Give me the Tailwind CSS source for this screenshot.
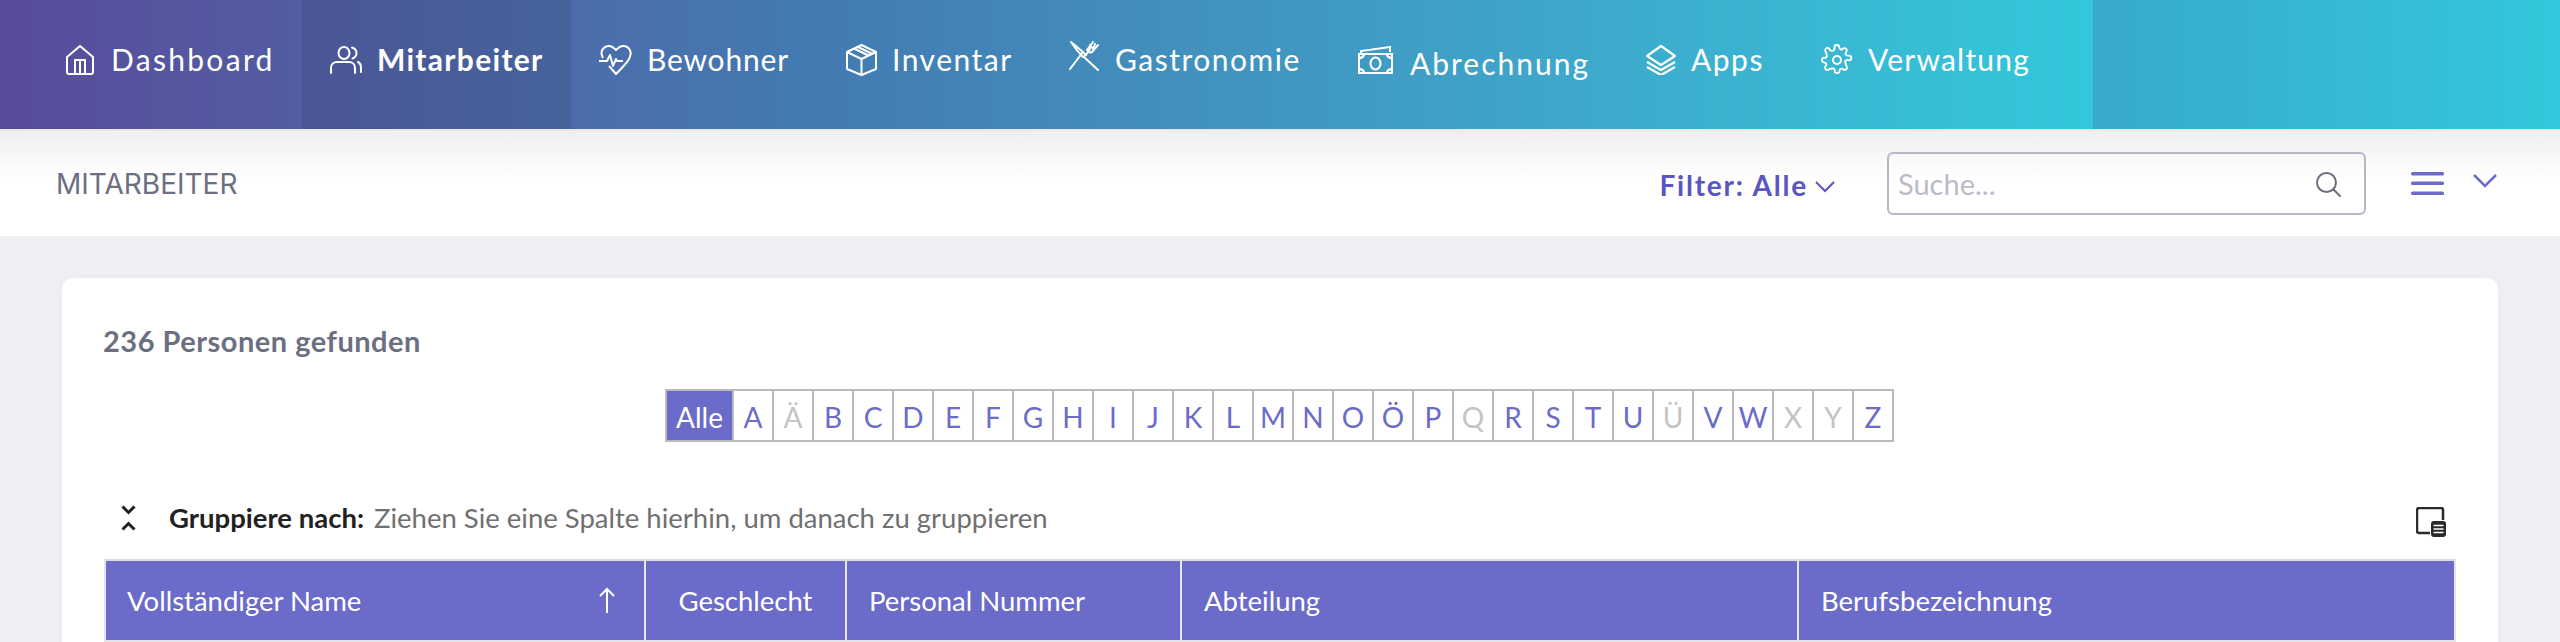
<!DOCTYPE html>
<html lang="de"><head><meta charset="utf-8"><title>Mitarbeiter</title>
<script src="https://cdn.jsdelivr.net/npm/@tailwindcss/browser@4"></script></head>
<body class="m-0">
<div class="w-[2560px] h-[642px] overflow-hidden bg-[#f0f0f4] font-['Lato',sans-serif]">
  <nav class="flex h-[129px] text-white text-[30px] tracking-[1.5px]">
    <div class="w-[2093px] flex pl-[37px] bg-linear-to-r from-[#574b9b] via-[#4379b1] via-38% to-[#32c8dc]">
      <a class="w-[265px] pl-[28px] pb-[10px] flex items-center gap-[16px]"><svg class="w-[30px] h-[30px] shrink-0" viewBox="0 0 30 30" fill="none" stroke="currentColor" stroke-width="2" stroke-linejoin="round"><path d="M2 12 15 1l13 11v15a2 2 0 0 1-2 2H4a2 2 0 0 1-2-2z"/><path d="M10 29V15h10v14M15 15v14"/></svg><span class="tracking-[2.3px]">Dashboard</span></a>
      <a class="w-[269px] pl-[28px] pb-[10px] flex items-center gap-[15px] bg-black/8 font-bold tracking-[1.3px]"><svg class="w-[32px] h-[28px] shrink-0" viewBox="0 0 32 28" fill="none" stroke="currentColor" stroke-width="2" stroke-linecap="round"><ellipse cx="14" cy="7" rx="5.5" ry="6"/><path d="M22 1.5c3 1 4.5 3 4.5 5.500s-1.500 4.500-4 5.500M1 27v-5c0-4 3-6 6-6h12c4 0 6 3 6 6v5M28 16c2 1 3 3 3 6v4"/></svg><span>Mitarbeiter</span></a>
      <a class="w-[246px] pl-[27px] pb-[10px] flex items-center gap-[15px]"><svg class="w-[34px] h-[30px] shrink-0" viewBox="0 0 34 30" fill="none" stroke="currentColor" stroke-width="2" stroke-linejoin="round"><path d="M5 13C1 6 6 1 11 1c3 0 5 2 7 4 2-2 4-4 7-4 6 0 10 6 6 13-2 4-8 10-13 15l-7-8"/><path d="M1 16h8l3-6 3 11 3-7 1 2h6"/></svg><span class="tracking-[0.8px]">Bewohner</span></a>
      <a class="w-[223px] pl-[29px] pb-[10px] flex items-center gap-[15px]"><svg class="w-[31px] h-[32px] shrink-0" viewBox="0 0 31 32" fill="none" stroke="currentColor" stroke-width="2" stroke-linejoin="round"><path d="M15.500 1 30 8v17l-14.500 6L1 25V8z"/><path d="M1 8l14.500 7L30 8M15.500 15v16M8 4.500l14.500 7M12 3l14.500 7"/></svg><span>Inventar</span></a>
      <a class="w-[288px] pl-[29px] pb-[10px] flex items-center gap-[16px]"><svg class="w-[30px] h-[30px] shrink-0 mb-[8px]" viewBox="0 0 30 30" fill="none" stroke="currentColor" stroke-width="2" stroke-linecap="round" stroke-linejoin="round"><path d="M2 1c4 6 8 11 12 15l3-2C13 10 7 5 2 1zM15 16l14 13"/><path d="M1 28 14 11M17 14l4-6M24 1l-6 8c1 2 3 3 5 2l6-7M21 4l3 4M26 3l-2 5"/></svg><span>Gastronomie</span></a>
      <a class="w-[289px] pl-[30px] pb-[10px] flex items-center gap-[17px]"><svg class="w-[35px] h-[28px] shrink-0" viewBox="0 0 35 28" fill="none" stroke="currentColor" stroke-width="2"><path d="M3 8V5l29-4v5"/><path d="M1 8h33v19H1z"/><ellipse cx="17.500" cy="17.500" rx="5" ry="6"/><path d="M1 12c3 0 5-2 5-4M34 12c-3 0-5-2-5-4M1 23c3 0 5 2 5 4M34 23c-3 0-5 2-5 4" stroke-width="2.500"/></svg><span class="mt-[7px] tracking-[2px]">Abrechnung</span></a>
      <a class="w-[175px] pl-[29px] pb-[10px] flex items-center gap-[15px]"><svg class="w-[30px] h-[30px] shrink-0" viewBox="0 0 30 30" fill="none" stroke="currentColor" stroke-width="2.200" stroke-linejoin="round"><path d="M15 1 29 11 15 20 1 11z"/><path d="M1 17l14 8 14-8M1 22l14 8 14-8"/></svg><span>Apps</span></a>
      <a class="pl-[29px] pb-[10px] flex items-center gap-[15px]"><svg class="w-[32px] h-[32px] shrink-0" viewBox="0 0 24 24" fill="none" stroke="currentColor" stroke-width="1.500" stroke-linejoin="round"><circle cx="12" cy="12" r="3"/><path d="M19.400 15a1.650 1.650 0 0 0 .330 1.820l.060.060a2 2 0 1 1-2.830 2.830l-.060-.060a1.650 1.650 0 0 0-2.800 1.170V21a2 2 0 0 1-4 0v-.090A1.650 1.650 0 0 0 7.300 19.400a1.650 1.650 0 0 0-1.820.330l-.060.060a2 2 0 1 1-2.830-2.830l.060-.060A1.650 1.650 0 0 0 1.650 14.100H1.500a2 2 0 0 1 0-4h.090A1.650 1.650 0 0 0 3.100 7.300a1.650 1.650 0 0 0-.330-1.820l-.060-.060a2 2 0 1 1 2.830-2.830l.060.060A1.650 1.650 0 0 0 9.900 1.650V1.500a2 2 0 0 1 4 0v.090a1.650 1.650 0 0 0 2.800 1.170l.060-.060a2 2 0 1 1 2.830 2.830l-.060.060a1.650 1.650 0 0 0 1.170 2.800H22a2 2 0 0 1 0 4h-.090a1.650 1.650 0 0 0-2.510 2.610z" transform="translate(1.200 1.200) scale(.9)"/></svg><span class="tracking-[1.2px]">Verwaltung</span></a>
    </div>
    <div class="flex-1 bg-linear-to-r from-[#38a9cb] to-[#32c8dc]"></div>
  </nav>
  <header class="h-[107px] flex items-center pl-[56px] border-t-2 border-[#e8e8ec] bg-linear-to-b from-[#efefef] via-white via-45% to-white">
    <h1 class="text-[28px] font-normal text-[#6b6f82] font-['Inter',sans-serif] tracking-[0px]">MITARBEITER</h1>
    <div class="ml-auto flex items-center text-[#5a55c0] text-[28px] font-bold tracking-[1.800px] mt-[2px]">Filter: Alle<svg class="w-[20px] h-[12px] ml-[7px] mt-[5px]" viewBox="0 0 20 12" fill="none" stroke="currentColor" stroke-width="2"><path d="M1 1l9 9 9-9"/></svg></div>
    <div class="w-[479px] h-[63px] ml-[52px] border-2 border-[#b5b8c4] rounded-[6px] flex items-center pl-[9px] pr-[23px] text-[#b9bcc8] text-[29px]"><span>Suche...</span><svg class="w-[26px] h-[26px] ml-auto text-[#6b6f7c]" viewBox="0 0 26 26" fill="none" stroke="currentColor" stroke-width="2" stroke-linecap="round"><circle cx="11.500" cy="11.500" r="9.500"/><path d="M18.500 18.500 25 25"/></svg></div>
    <svg class="w-[33px] h-[23px] ml-[45px] text-[#6b6bc9]" viewBox="0 0 33 23" fill="currentColor"><rect width="33" height="3.500" rx="1.500"/><rect y="9.500" width="33" height="3.500" rx="1.500"/><rect y="19.500" width="33" height="3.500" rx="1.500"/></svg>
    <svg class="w-[24px] h-[14px] ml-[29px] mr-[63px] mb-[5px] text-[#6b6bc9]" viewBox="0 0 24 14" fill="none" stroke="currentColor" stroke-width="2.500"><path d="M1 1l11 11L23 1"/></svg>
  </header>
  <main class="mt-[42px] mx-[62px] w-[2436px] h-[400px] bg-white rounded-t-[10px] pt-[47px] pl-[42px] pr-[42px] shadow-[0_0_12px_rgba(0,0,0,0.03)]">
    <p class="text-[29px] leading-[32px] font-bold text-[#6b6f82] tracking-[0.500px] ml-[-1px]">236 Personen gefunden</p>
    <div class="flex justify-center mt-[32px] ml-[-1px]">
      <div class="flex h-[53px] border-2 border-[#bbbbbb] text-[28px] text-[#6b6bc9] bg-white">
        <span class="w-[67px] pt-[2px] bg-[#6b6bc9] text-white flex items-center justify-center border-r-2 border-[#bbbbbb]">Alle</span>
        <span class="w-[40px] pt-[2px] flex items-center justify-center border-r-2 border-[#bbbbbb]">A</span>
        <span class="w-[40px] pt-[2px] flex items-center justify-center border-r-2 border-[#bbbbbb] text-[#c4c4c4]">Ä</span>
        <span class="w-[40px] pt-[2px] flex items-center justify-center border-r-2 border-[#bbbbbb]">B</span>
        <span class="w-[40px] pt-[2px] flex items-center justify-center border-r-2 border-[#bbbbbb]">C</span>
        <span class="w-[40px] pt-[2px] flex items-center justify-center border-r-2 border-[#bbbbbb]">D</span>
        <span class="w-[40px] pt-[2px] flex items-center justify-center border-r-2 border-[#bbbbbb]">E</span>
        <span class="w-[40px] pt-[2px] flex items-center justify-center border-r-2 border-[#bbbbbb]">F</span>
        <span class="w-[40px] pt-[2px] flex items-center justify-center border-r-2 border-[#bbbbbb]">G</span>
        <span class="w-[40px] pt-[2px] flex items-center justify-center border-r-2 border-[#bbbbbb]">H</span>
        <span class="w-[40px] pt-[2px] flex items-center justify-center border-r-2 border-[#bbbbbb]">I</span>
        <span class="w-[40px] pt-[2px] flex items-center justify-center border-r-2 border-[#bbbbbb]">J</span>
        <span class="w-[40px] pt-[2px] flex items-center justify-center border-r-2 border-[#bbbbbb]">K</span>
        <span class="w-[40px] pt-[2px] flex items-center justify-center border-r-2 border-[#bbbbbb]">L</span>
        <span class="w-[40px] pt-[2px] flex items-center justify-center border-r-2 border-[#bbbbbb]">M</span>
        <span class="w-[40px] pt-[2px] flex items-center justify-center border-r-2 border-[#bbbbbb]">N</span>
        <span class="w-[40px] pt-[2px] flex items-center justify-center border-r-2 border-[#bbbbbb]">O</span>
        <span class="w-[40px] pt-[2px] flex items-center justify-center border-r-2 border-[#bbbbbb]">Ö</span>
        <span class="w-[40px] pt-[2px] flex items-center justify-center border-r-2 border-[#bbbbbb]">P</span>
        <span class="w-[40px] pt-[2px] flex items-center justify-center border-r-2 border-[#bbbbbb] text-[#c4c4c4]">Q</span>
        <span class="w-[40px] pt-[2px] flex items-center justify-center border-r-2 border-[#bbbbbb]">R</span>
        <span class="w-[40px] pt-[2px] flex items-center justify-center border-r-2 border-[#bbbbbb]">S</span>
        <span class="w-[40px] pt-[2px] flex items-center justify-center border-r-2 border-[#bbbbbb]">T</span>
        <span class="w-[40px] pt-[2px] flex items-center justify-center border-r-2 border-[#bbbbbb]">U</span>
        <span class="w-[40px] pt-[2px] flex items-center justify-center border-r-2 border-[#bbbbbb] text-[#c4c4c4]">Ü</span>
        <span class="w-[40px] pt-[2px] flex items-center justify-center border-r-2 border-[#bbbbbb]">V</span>
        <span class="w-[40px] pt-[2px] flex items-center justify-center border-r-2 border-[#bbbbbb]">W</span>
        <span class="w-[40px] pt-[2px] flex items-center justify-center border-r-2 border-[#bbbbbb] text-[#c4c4c4]">X</span>
        <span class="w-[40px] pt-[2px] flex items-center justify-center border-r-2 border-[#bbbbbb] text-[#c4c4c4]">Y</span>
        <span class="w-[38px] pt-[2px] flex items-center justify-center">Z</span>
      </div>
    </div>
    <div class="flex items-center h-[40px] mt-[56px] text-[27.5px] ml-[17px]">
      <svg class="w-[15px] h-[26px] text-[#222]" viewBox="0 0 15 26" fill="none" stroke="currentColor" stroke-width="3"><path d="M1.500 1.500l6 6 6-6M1.500 24.500l6-6 6 6"/></svg>
      <span class="font-bold text-[#222] ml-[33px]">Gruppiere nach:</span>
      <span class="text-[#707070] ml-[10px]">Ziehen Sie eine Spalte hierhin, um danach zu gruppieren</span>
      <svg class="w-[30px] h-[30px] ml-auto mr-[10px] mt-[8px] text-[#2a2a2a]" viewBox="0 0 30 30" fill="none"><path d="M14 26H3a2 2 0 0 1-2-2V3a2 2 0 0 1 2-2h22a2 2 0 0 1 2 2v10" stroke="currentColor" stroke-width="2.500"/><rect x="15" y="14" width="15" height="16" rx="3" fill="currentColor"/><path d="M17.500 18.500h10M17.500 22h10M17.500 25.500h10" stroke="#fff" stroke-width="1.500"/></svg>
    </div>
    <div class="flex h-[83px] mt-[21px] bg-[#6b6bc9] border-y-2 border-x-2 border-x-[#e4e4e8] border-t-[#dddddd] border-b-[#e4e4e8] text-white text-[27.5px]">
      <div class="w-[540px] flex items-center pl-[21px] pr-[29px] border-r-2 border-[#e8e8f4]"><span>Vollständiger Name</span><svg class="w-[16px] h-[26px] ml-auto mb-[2px]" viewBox="0 0 16 26" fill="none" stroke="currentColor" stroke-width="2"><path d="M8 26V2M1 9l7-7 7 7"/></svg></div>
      <div class="w-[201px] flex items-center justify-center border-r-2 border-[#e8e8f4]">Geschlecht</div>
      <div class="w-[335px] flex items-center pl-[22px] border-r-2 border-[#e8e8f4]">Personal Nummer</div>
      <div class="w-[617px] flex items-center pl-[22px] border-r-2 border-[#e8e8f4]">Abteilung</div>
      <div class="flex-1 flex items-center pl-[22px]">Berufsbezeichnung</div>
    </div>
  </main>
</div>
</body></html>
